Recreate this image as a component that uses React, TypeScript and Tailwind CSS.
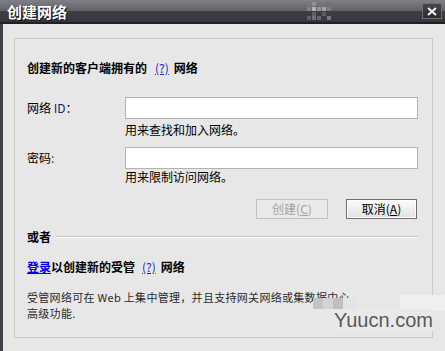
import React from "react";

const Checker = () => {
  const cells: [number, number, string][] = [
    [0, 0, "#75777c"], [5, 0, "#8e9095"], [20, 0, "#707277"],
    [0, 5, "#808287"], [5, 5, "#b0b2b7"], [10, 5, "#94969b"], [15, 5, "#a3a5aa"], [20, 5, "#7c7e83"],
    [5, 10, "#606267"], [15, 10, "#5c5e63"],
    [0, 14, "#5e6065"], [5, 14, "#6e7075"], [10, 14, "#66686d"], [20, 14, "#74767b"],
  ];
  return (
    <svg width="26" height="19" viewBox="0 0 26 19" className="absolute left-[307px] top-[2px]">
      {cells.map(([x, y, c], i) => (
        <rect key={i} x={x} y={y} width="4" height="4" fill={c} />
      ))}
    </svg>
  );
};

export default function App() {
  const font = "font-['Noto_Sans_CJK_SC','Noto_Sans',sans-serif]";
  return (
    <div className={`relative w-[445px] h-[351px] overflow-hidden bg-[#e7e7e7] ${font}`}>
      {/* title bar */}
      <div className="relative h-[24px] flex items-center justify-between pl-[7px] pr-[3px] bg-[linear-gradient(to_bottom,#7e8085_0px,#606267_11px,#3d3f44_11px,#35373c_22px,#1f2023_22px,#1f2023_24px)]">
        <span className="text-[15px] leading-[18px] font-bold text-white [text-shadow:1px_1px_0_#111]">创建网络</span>
        <Checker />
        <div className="w-[20px] h-[16px] mb-[2px] border border-[#6e7076] bg-[linear-gradient(to_bottom,#45474c,#2a2b2f)] flex items-center justify-center">
          <svg width="10" height="9" viewBox="0 0 10 9">
            <path d="M1 1 L9 8 M9 1 L1 8" stroke="#ffffff" strokeWidth="1.8" />
          </svg>
        </div>
      </div>

      {/* body */}
      <div className="flex h-[327px]">
        <div className="w-[3px] bg-[#3f4146]" />
        <div className="pl-[11px] pt-[14px]">
          <div className="w-[419px] h-[300px] border border-[#cbcbc4] pl-[12px] text-black">
            <div className="mt-[21px] h-[16px] flex items-center text-[12px] leading-[16px] font-bold">
              <span>创建新的客户端拥有的</span>
              <span className="ml-[8px] text-[#2323c8] font-normal underline">(?)</span>
              <span className="ml-[5px]">网络</span>
            </div>

            <div className="mt-[21px] flex items-center h-[22px]">
              <span className="w-[98px] text-[12px] leading-[16px]">
                网络 <span className="text-[#1a1a6a]">ID</span>：
              </span>
              <div className="w-[293px] h-[22px] bg-white border border-[#b2b2b2]" />
            </div>
            <div className="mt-[4px] pl-[98px] h-[14px] text-[12px] leading-[14px]">用来查找和加入网络。</div>

            <div className="mt-[10px] flex items-center h-[22px]">
              <span className="w-[98px] text-[12px] leading-[16px]">
                密码<span className="text-[#6a2a7a]">:</span>
              </span>
              <div className="w-[293px] h-[22px] bg-white border border-[#b2b2b2]" />
            </div>
            <div className="mt-[1px] pl-[98px] h-[14px] text-[12px] leading-[14px]">用来限制访问网络。</div>

            <div className="mt-[15px] flex justify-end gap-[18px] pr-[15px]">
              <div className="w-[72px] h-[20px] border border-[#c2c2c2] bg-[#e9e9e9] flex items-center justify-center text-[12px] leading-[14px] text-[#a3a3a3]">
                创建(<span className="underline">C</span>)
              </div>
              <div className="w-[71px] h-[20px] border border-[#6f6f6f] bg-[linear-gradient(to_bottom,#fbfbfb,#e2e2e2)] shadow-[inset_0_0_0_1px_#ffffff] flex items-center justify-center text-[12px] leading-[14px] text-black">
                取消(<span className="underline">A</span>)
              </div>
            </div>

            <div className="mt-[10px] h-[16px] flex items-center pr-[14px]">
              <span className="text-[12px] leading-[16px] font-bold">或者</span>
              <div className="flex-1 ml-[5px] h-[2px] border-t border-[#c4c4c4] border-b border-b-white" />
            </div>

            <div className="mt-[14px] h-[16px] flex items-center text-[12px] leading-[16px] font-bold">
              <span className="text-[#0000ee] underline">登录</span>
              <span>以创建新的受管</span>
              <span className="ml-[7px] text-[#2323c8] font-normal underline">(?)</span>
              <span className="ml-[5px]">网络</span>
            </div>

            <div className="mt-[14px] text-[11px] leading-[16px] text-[#2a2a2a] whitespace-nowrap tracking-[0.3px]">
              <div>受管网络可在 Web 上集中管理，并且支持网关网络或集数据中心</div>
              <div>高级功能.</div>
            </div>
          </div>
        </div>
      </div>

      {/* watermark overlay */}
      <div className="absolute left-[313px] top-[298px] flex">
        <div className="w-[10px] h-[11px] bg-[#c4c4c4]" />
        <div className="w-[10px] h-[11px] bg-[#d4d4d4]" />
        <div className="w-[10px] h-[11px] bg-[#c0c0c0]" />
        <div className="w-[12px] h-[11px] bg-[#e3e3e3]" />
      </div>
      <div className="absolute left-[400px] top-[295px] w-[45px] h-[16px] bg-[#efefef]" />
      <div className="absolute left-[334px] top-[309px] text-[20px] leading-[22px] text-[#595959] font-['Liberation_Sans',Arial,sans-serif] bg-[#e9e9e9]">
        Yuucn.com
      </div>
    </div>
  );
}
